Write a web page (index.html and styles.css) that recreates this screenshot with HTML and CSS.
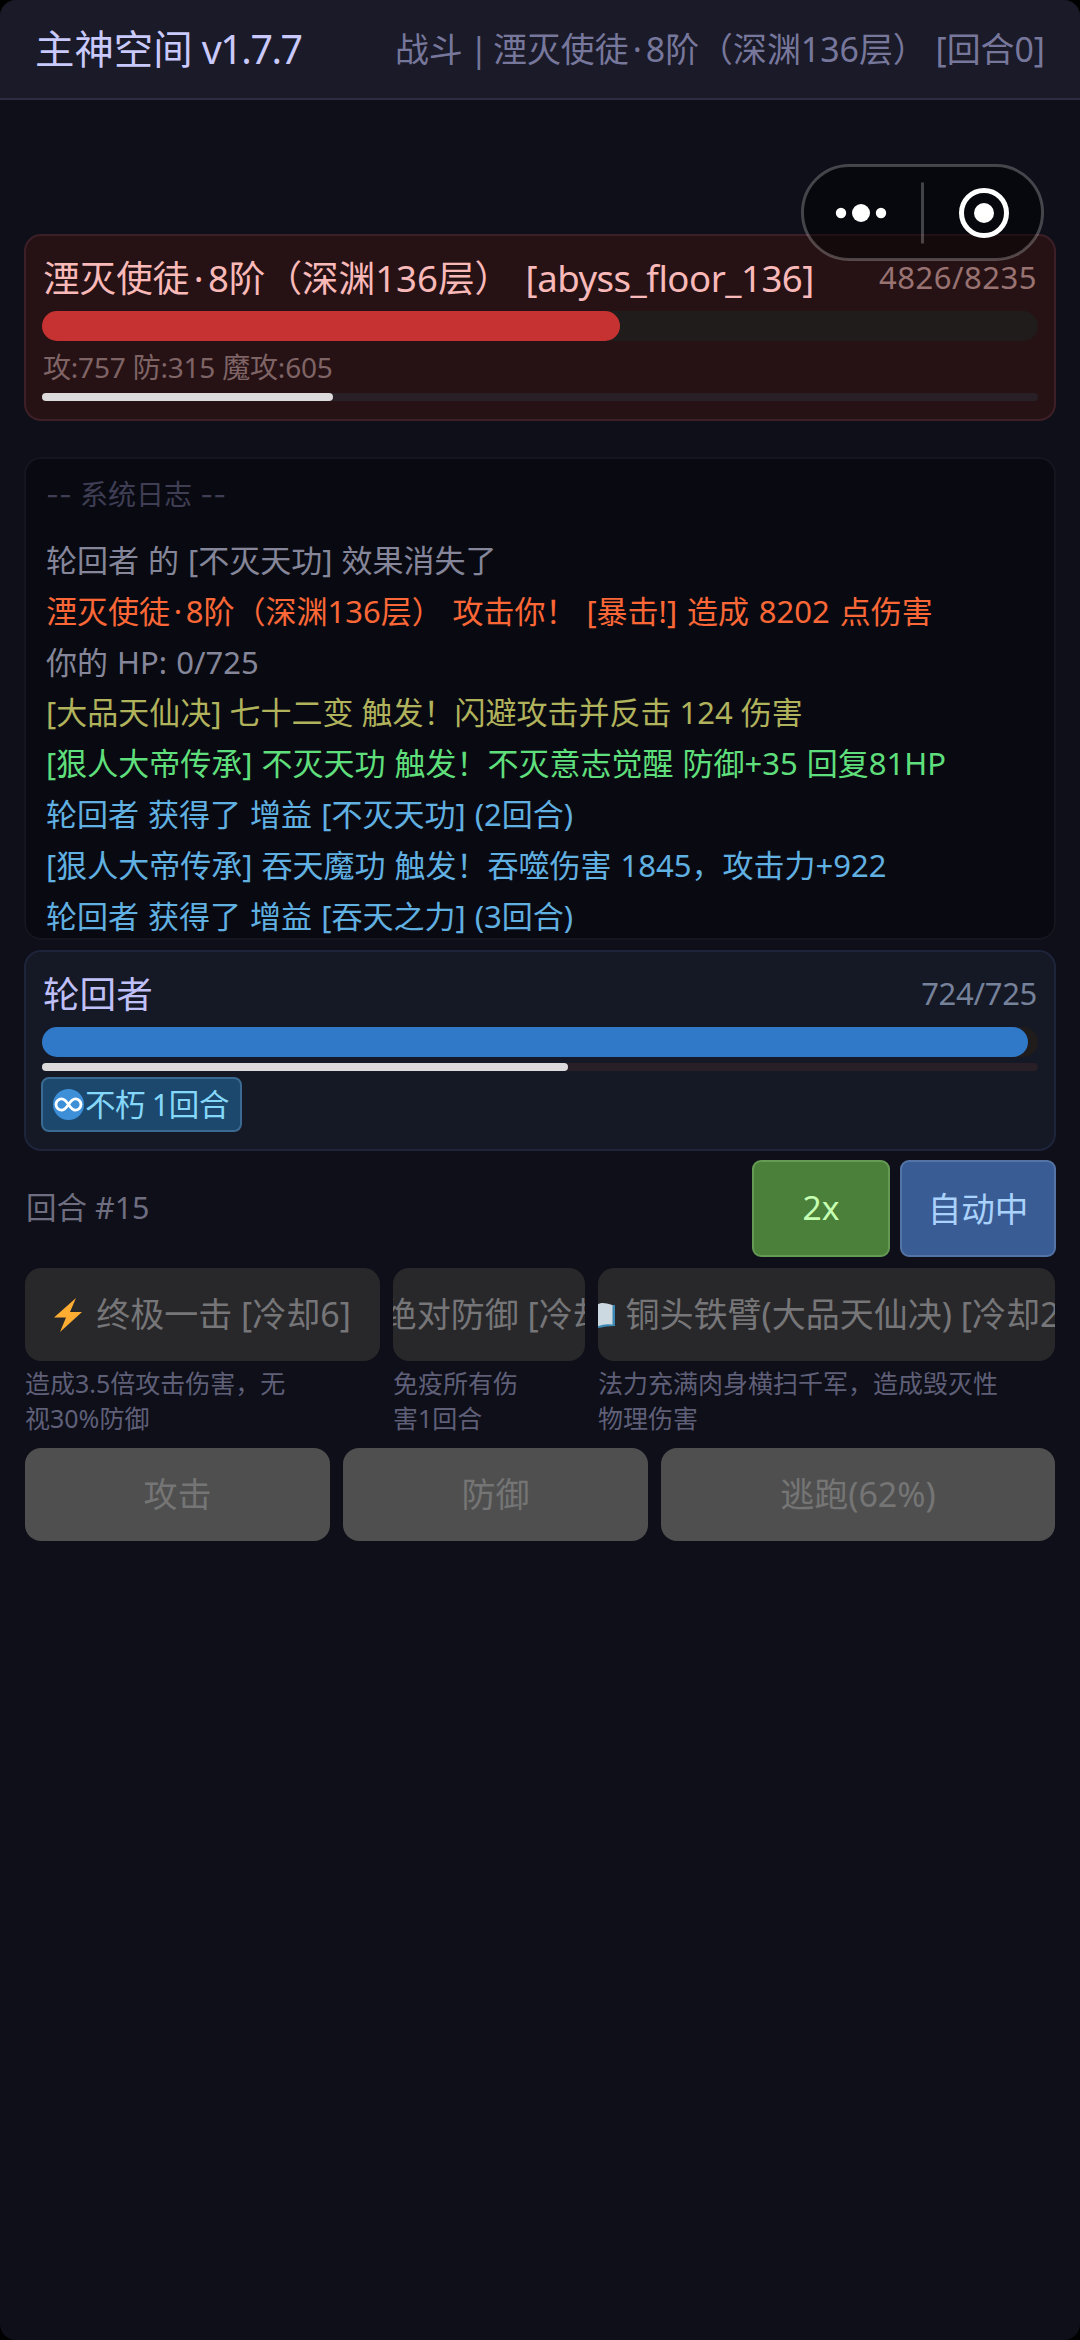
FILE: index.html
```html
<!DOCTYPE html>
<html lang="zh-CN">
<head>
<meta charset="utf-8">
<title>主神空间</title>
<link rel="stylesheet" href="styles.css">
</head>
<body>
<div class="screen">
  <header class="topbar">
    <h1 class="brand">主神空间 <span class="version">v1.7.7</span></h1>
    <p class="where">战斗<span class="sep"> | </span>湮灭使徒<span class="dot">·</span>8阶（深渊136层） [回合0]</p>
  </header>
  <div class="capsule">
    <svg viewBox="0 0 243 97" width="243" height="97">
      <rect x="1.5" y="1.5" width="240" height="94" rx="47" fill="#000" fill-opacity=".45" stroke="#fff" stroke-opacity=".24" stroke-width="3"/>
      <circle cx="40" cy="49" r="5.2" fill="#fff"/>
      <circle cx="60" cy="49" r="9" fill="#fff"/>
      <circle cx="80" cy="49" r="5.2" fill="#fff"/>
      <path d="M121.500 18.500v61" stroke="#fff" stroke-opacity=".24" stroke-width="3"/>
      <circle cx="183" cy="49" r="22.500" fill="none" stroke="#fff" stroke-width="5"/>
      <circle cx="183" cy="49" r="10" fill="#fff"/>
    </svg>
  </div>
  <main class="battle">
    <section class="fighter enemy">
      <div class="row">
        <h2 class="name">湮灭使徒<span class="dot">·</span>8阶（深渊136层） <span class="id">[abyss_floor_136]</span></h2>
        <span class="hp">4826/8235</span>
      </div>
      <div class="bar"><i style="width:58%"></i></div>
      <p class="stats">攻:757 防:315 魔攻:605</p>
      <div class="tick"><i style="width:29.2%"></i></div>
    </section>
    <section class="log">
      <p class="log-title"><span class="dash">--</span> 系统日志 <span class="dash">--</span></p>
      <p>轮回者 的 [不灭天功] 效果消失了</p>
      <p class="hit">湮灭使徒<span class="dot">·</span>8阶（深渊136层） 攻击你！ [暴击!] 造成 8202 点伤害</p>
      <p>你的 HP: 0/725</p>
      <p class="dodge">[大品天仙决] 七十二变 触发！闪避攻击并反击 124 伤害</p>
      <p class="heal">[狠人大帝传承] 不灭天功 触发！不灭意志觉醒 防御+35 回复81HP</p>
      <p class="buff">轮回者 获得了 增益 [不灭天功] (2回合)</p>
      <p class="buff">[狠人大帝传承] 吞天魔功 触发！吞噬伤害 1845，攻击力+922</p>
      <p class="buff">轮回者 获得了 增益 [吞天之力] (3回合)</p>
    </section>
    <section class="fighter player">
      <div class="row">
        <h2 class="name">轮回者</h2>
        <span class="hp">724/725</span>
      </div>
      <div class="bar"><i style="width:99%"></i></div>
      <div class="tick"><i style="width:52.8%"></i></div>
      <div class="badge">
        <svg viewBox="0 0 31 31" width="31" height="31"><circle cx="15.500" cy="15.500" r="15.500" fill="#3d8fd8"/><path d="M15.500 15.500C12.500 11 10.500 9.800 8.700 9.800a5.700 5.700 0 0 0 0 11.400C10.500 21.200 12.500 20 15.500 15.500S20.500 9.800 22.300 9.800a5.700 5.700 0 0 1 0 11.400C20.500 21.200 18.500 20 15.500 15.500z" fill="none" stroke="#fff" stroke-width="2.800"/></svg>
        <span>不朽 1回合</span>
      </div>
    </section>
    <div class="controls">
      <span class="round">回合 #15</span>
      <button class="speed">2x</button>
      <button class="auto">自动中</button>
    </div>
    <div class="skills">
      <div class="skill">
        <button><svg viewBox="0 0 28 34" width="28" height="34"><path d="M22 0L0 19.500H12L6 34 28 14H16z" fill="#ffac33"/></svg><span>终极一击 [冷却6]</span></button>
        <p>造成3.5倍攻击伤害，无<br>视30%防御</p>
      </div>
      <div class="skill">
        <button><svg viewBox="0 0 28 34" width="28" height="34"><path d="M14 2L26 6V17Q26 27 14 32Q2 27 2 17V6z" fill="#55acee"/></svg><span>绝对防御 [冷却5]</span></button>
        <p>免疫所有伤<br>害1回合</p>
      </div>
      <div class="skill book">
        <button><svg viewBox="0 0 33 30" width="33" height="30"><path d="M0 5H33V26Q24 26 16.500 28 9 26 0 26z" fill="#3b88b5"/><path d="M16.500 4Q20 1.500 30.500 5V24.500Q22 23.500 16.500 26 11 23.500 2.500 24.500V5Q13 1.500 16.500 4z" fill="#ccd9e0"/></svg><span>铜头铁臂(大品天仙决) [冷却2]</span></button>
        <p>法力充满肉身横扫千军，造成毁灭性<br>物理伤害</p>
      </div>
    </div>
    <div class="actions">
      <button>攻击</button>
      <button>防御</button>
      <button>逃跑(62%)</button>
    </div>
  </main>
</div>
</body>
</html>
```
FILE: styles.css
```css
*{box-sizing:border-box;margin:0;padding:0}
body{background:#000;font-family:"Noto Sans","Noto Sans CJK SC",sans-serif;font-weight:400}
h1,h2{font-weight:400}
button{border:0;font:inherit;color:inherit}
svg{display:block;flex:none}
.dot{margin:0 .12em}

.screen{position:relative;width:1080px;height:2340px;background:#0e0f18;border-radius:16px;overflow:hidden}
.topbar{height:100px;display:flex;align-items:center;justify-content:space-between;padding:0 35px 4px;background:#1a1a28;border-bottom:2px solid #2c2d42}
.brand{font-size:39.400px;color:#c9c9fb}
.version{letter-spacing:-1.500px;margin-left:-1px}
.where{font-size:33.900px;color:#77779c}
.sep{letter-spacing:-2px}
.capsule{position:absolute;left:801px;top:164px;z-index:2}

.battle{padding:134px 24px 0;display:flex;flex-direction:column}
.fighter{border:2px solid;border-radius:17px;padding:0 16px}
.enemy{height:187px;background:#261214;border-color:#3d1f28}
.player{height:201px;margin-top:10px;background:#151825;border-color:#1e243a}
.row{display:flex;align-items:center;justify-content:space-between;height:75px;padding:7px 1px 0}
.row .name{margin-top:-2px}
.name{font-size:36.600px;white-space:nowrap}
.id{margin-left:5px;letter-spacing:-.5px}
.hp{font-size:31px}
.enemy .name{color:#f9b9b9}
.enemy .hp{color:#997272;letter-spacing:.5px}
.player .name{color:#c0c0f8}
.player .hp{color:#76819a;letter-spacing:-.3px}
.bar{height:30px;border-radius:15px;background:#201c1b}
.bar i{display:block;height:100%;border-radius:15px;background:#c63232}
.player .bar i{background:#3078c8}
.stats{font-size:28px;line-height:34px;letter-spacing:-.2px;color:#7f6466;margin:9px 1px}
.tick{height:8px;border-radius:4px;background:#291f26}
.tick i{display:block;height:100%;border-radius:4px;background:#dcdadb}
.player .tick{margin-top:6px}

.log{height:483px;margin-top:36px;border:2px solid #14151e;border-radius:17px;background:#090a11;padding:17px 20px 0;color:#85869a;font-size:31px;line-height:50.800px;word-spacing:1px;overflow:hidden;white-space:nowrap}
.log .log-title{font-size:28px;line-height:36px;margin-bottom:22px;color:#3f3e55}
.dash{font-family:Inter,sans-serif}
.hit{color:#fb6736;word-spacing:1.800px}
.dodge{color:#b1b25c;word-spacing:0}
.heal{color:#5fdf7c}
.buff{color:#60b0e2}

.badge{display:flex;align-items:center;gap:1px;width:201px;height:55px;margin:6px 0 0 -1px;padding:0 10px;border:2px solid #3a6a92;border-radius:8px;background:#1b486c;color:#86d8fa;font-size:30.500px;letter-spacing:-.4px;word-spacing:-1px;white-space:nowrap}
.badge span{margin-top:-3px}
.controls{display:flex;align-items:center;gap:10px;height:97px;margin-top:9px}
.round{flex:1;color:#6f6e80;font-size:30.500px;margin-left:2px;padding-bottom:5px}
.controls button{height:97px;border:2px solid;border-radius:9px;font-size:33.600px;padding-bottom:3px}
.controls .speed{width:138px;background:#4b803a;border-color:#659a55;color:#c6ffb2}
.controls .auto{width:156px;background:#3a5c94;border-color:#5474a8;color:#a9d2fc}

.skills{display:grid;grid-template-columns:355px 192px 457px;gap:13px;margin-top:11px;padding-left:1px}
.skill button,.actions button{display:flex;align-items:center;justify-content:center;gap:14px;width:100%;height:93px;border-radius:16px;background:#28282a;color:#767679;font-size:34px;white-space:nowrap;overflow:hidden}
.skill span{margin-top:-4px}
.skill.book button{gap:10px}
.skill p{margin-top:5px;font-size:25px;line-height:35px;color:#5f5f78;white-space:nowrap}
.actions{display:grid;grid-template-columns:305px 305px 394px;gap:13px;margin-top:12px;padding-left:1px}
.actions button{padding-bottom:4px;background:#4f4f4f;color:#757575}
```
